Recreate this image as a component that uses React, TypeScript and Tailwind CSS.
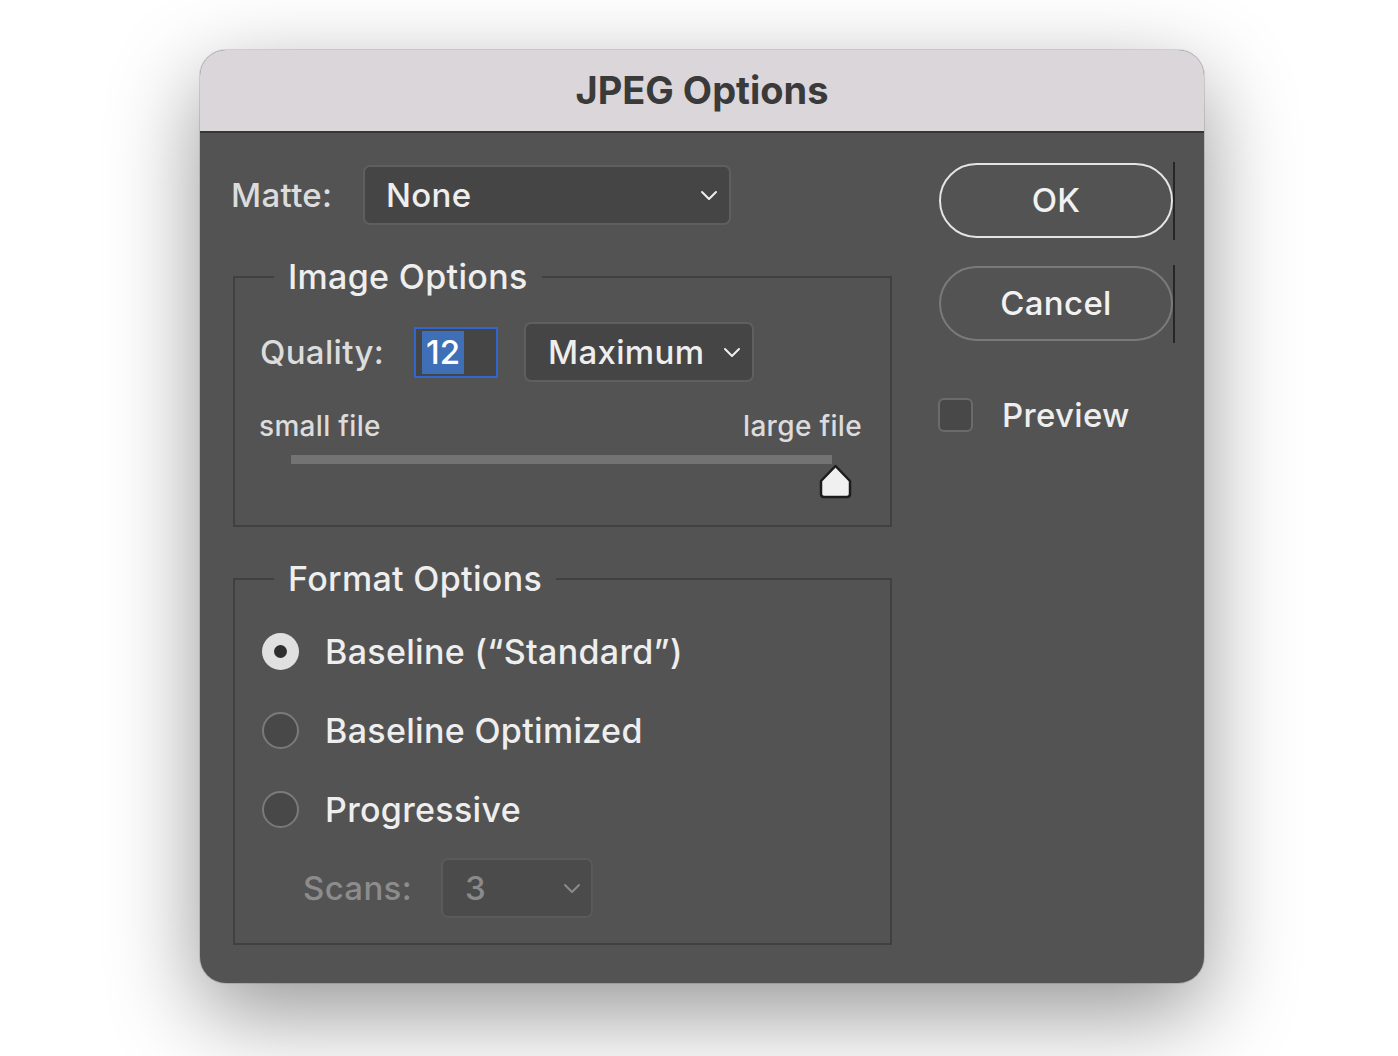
import React from "react";

function Chevron({ className = "" }: { className?: string }) {
  return (
    <svg width="18" height="11" viewBox="0 0 18 11" className={className} fill="none">
      <path d="M2 2 L9 9 L16 2" stroke="currentColor" strokeWidth="2" strokeLinecap="round" strokeLinejoin="round" />
    </svg>
  );
}

function Radio({ checked, label }: { checked?: boolean; label: string }) {
  return (
    <div className="flex h-[79px] items-center pl-[27px]">
      {checked ? (
        <div className="flex h-[37px] w-[37px] items-center justify-center rounded-full bg-[#e0e0e0]">
          <div className="h-[13px] w-[13px] rounded-full bg-[#2e2e2e]" />
        </div>
      ) : (
        <div className="h-[37px] w-[37px] rounded-full border-2 border-[#7a7a7a] bg-[#484848]" />
      )}
      <span className="ml-[26px] text-[34px] leading-none text-[#eeeeee]">{label}</span>
    </div>
  );
}

function SliderThumb() {
  return (
    <svg width="35" height="35" viewBox="0 0 35 35" className="ml-[583px] block">
      <path
        d="M17.5 2 L32 17 V30 Q32 33 29 33 H6 Q3 33 3 30 V17 Z"
        fill="#f0f0f0"
        stroke="#1c1c1c"
        strokeWidth="2.5"
        strokeLinejoin="round"
      />
    </svg>
  );
}

export default function App() {
  return (
    <div className="min-h-[1056px] w-full overflow-hidden bg-white pl-[200px] pt-[50px] font-['Inter',sans-serif] font-medium tracking-[0.02em]">
      <div className="flex h-[933px] w-[1004px] flex-col overflow-hidden rounded-[26px] bg-[#535353] shadow-[0_30px_90px_rgba(0,0,0,0.42),0_0_0_1px_rgba(0,0,0,0.12)]">
        {/* title bar */}
        <div className="flex h-[83px] shrink-0 items-center justify-center border-b-2 border-[#363636] bg-[#dbd6da] text-[38px] font-bold tracking-normal text-[#3a3a3a]">
          JPEG Options
        </div>

        <div className="flex flex-1 pl-[31px] pt-[32px]">
          {/* settings column */}
          <div className="flex w-[661px] flex-col">
            <div className="flex h-[60px] items-center">
              <span className="w-[132px] text-[33px] leading-none text-[#dcdcdc]">Matte:</span>
              <div className="flex h-[60px] w-[368px] items-center justify-between rounded-[7px] border-2 border-[#5f5f5f] bg-[#454545] pl-[21px] pr-[11px] text-[#eeeeee]">
                <span className="text-[33px] leading-none">None</span>
                <Chevron />
              </div>
            </div>

            <fieldset className="ml-[2px] mt-[35px] w-[659px] border-2 border-[#404040] pb-[26px]">
              <legend className="ml-[39px] px-[14px] text-[34px] leading-none text-[#eeeeee]">Image Options</legend>
              <div className="mt-[28px] flex h-[60px] items-center pl-[25px]">
                <span className="w-[154px] text-[33px] leading-none text-[#dcdcdc]">Quality:</span>
                <div className="flex h-[51px] w-[84px] items-center border-2 border-[#2f66d0] bg-[#454545] pl-[6px]">
                  <span className="flex h-[43px] w-[42px] items-center justify-center bg-[#3f6fb6] text-[33px] leading-none tracking-normal text-white">12</span>
                </div>
                <div className="ml-[26px] flex h-[60px] w-[230px] items-center justify-between rounded-[7px] border-2 border-[#5f5f5f] bg-[#454545] pl-[22px] pr-[11px] text-[#eeeeee]">
                  <span className="text-[33px] leading-none">Maximum</span>
                  <Chevron />
                </div>
              </div>
              <div className="mt-[30px] flex justify-between pl-[24px] pr-[28px] text-[28px] leading-none text-[#dcdcdc]">
                <span>small file</span>
                <span>large file</span>
              </div>
              <div className="ml-[56px] mt-[15px] h-[9px] w-[541px] bg-[#737373]" />
              <SliderThumb />
            </fieldset>

            <fieldset className="ml-[2px] mt-[35px] w-[659px] border-2 border-[#404040] pb-[25px]">
              <legend className="ml-[39px] px-[14px] text-[34px] leading-none text-[#eeeeee]">Format Options</legend>
              <div className="mt-[16px]">
                <Radio checked label="Baseline (“Standard”)" />
                <Radio label="Baseline Optimized" />
                <Radio label="Progressive" />
              </div>
              <div className="mt-[9px] flex h-[60px] items-center pl-[68px]">
                <span className="w-[138px] text-[33px] leading-none text-[#8c8c8c]">Scans:</span>
                <div className="flex h-[60px] w-[152px] items-center justify-between rounded-[7px] border-2 border-[#5a5a5a] bg-[#4b4b4b] pl-[22px] pr-[10px] text-[#8a8a8a]">
                  <span className="text-[33px] leading-none">3</span>
                  <Chevron />
                </div>
              </div>
            </fieldset>
          </div>

          {/* action column */}
          <div className="-mt-[2px] ml-[47px] flex flex-col">
            <div className="flex h-[75px] items-center">
              <button className="flex h-[75px] w-[234px] items-center justify-center rounded-full border-2 border-[#e4e4e4] bg-[#535353] text-[33px] leading-none text-[#f2f2f2]">
                OK
              </button>
              <div className="h-[78px] w-[2px] shrink-0 bg-[#262626]" />
            </div>
            <div className="mt-[28px] flex h-[75px] items-center">
              <button className="flex h-[75px] w-[234px] items-center justify-center rounded-full border-2 border-[#7a7a7a] bg-[#535353] text-[33px] leading-none text-[#f2f2f2]">
                Cancel
              </button>
              <div className="h-[78px] w-[2px] shrink-0 bg-[#262626]" />
            </div>
            <div className="-ml-[1px] mt-[57px] flex items-center">
              <div className="h-[34px] w-[35px] rounded-[6px] border-2 border-[#6b6b6b] bg-[#484848]" />
              <span className="ml-[29px] text-[33px] leading-none text-[#eeeeee]">Preview</span>
            </div>
          </div>
        </div>
      </div>
    </div>
  );
}
